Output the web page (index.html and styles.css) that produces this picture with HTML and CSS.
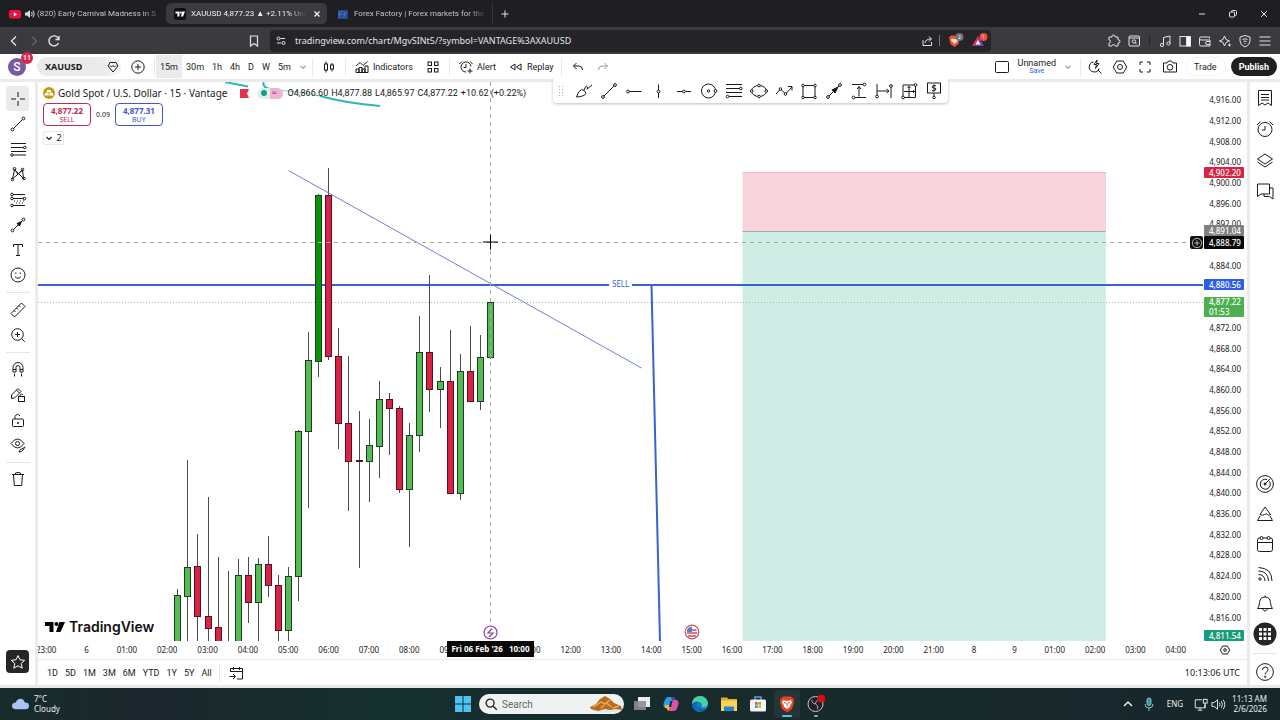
FILE: index.html
```html
<!DOCTYPE html>
<html lang="en">
<head>
    <meta charset="UTF-8">
    <meta name="viewport" content="width=device-width, initial-scale=1.0">
    <title>XAUUSD 4,877.23</title>
    <link rel="stylesheet" href="styles.css">
</head>
<body>
    <header class="browser">
        <div class="tabs">
            <a class="tab tab-first" href="#">
                <svg class="fav" viewBox="0 0 12 12"><rect y="2" width="12" height="8.500" rx="2" fill="#f0123c"/><path d="M4.800 4.300v4l3.400-2z" fill="#fff"/></svg>
                <svg class="fav" viewBox="0 0 12 12"><path d="M2 4.500h2l3-2.500v8l-3-2.500H2z" fill="#ddd"/><path d="M8.500 4q1.500 2 0 4M10 2.500q2.500 3.500 0 7" fill="none" stroke="#ddd"/></svg>
                <span class="tab-title">(820) Early Carnival Madness in S</span>
            </a>
            <a class="tab tab-active" href="#">
                <svg class="fav" viewBox="0 0 12 12"><rect width="12" height="12" rx="2" fill="#111"/><path d="M1.500 3.500h4v5h-2v-3h-2zM8 3.500h3l-2 5H7z" fill="#fff"/><circle cx="6.800" cy="4.500" r="1" fill="#fff"/></svg>
                <span class="tab-title">XAUUSD 4,877.23 ▲ +2.11% Unn</span>
                <svg class="fav tab-close" viewBox="0 0 12 12"><path d="M3.500 3.500l5 5M8.500 3.500l-5 5" fill="none" stroke="#eee" stroke-width="1.300"/></svg>
            </a>
            <a class="tab tab-last" href="#">
                <svg class="fav" viewBox="0 0 12 12"><rect x="1" y="2" width="10" height="9" fill="#29488c"/><path d="M2 10V4h4M2 6.500h3M7 10V5h3M7 7h2" fill="none" stroke="#4d78c8"/></svg>
                <span class="tab-title">Forex Factory | Forex markets for the</span>
            </a>
            <button class="new-tab" aria-label="New tab"><svg class="icon" viewBox="0 0 18 18"><path d="M9 5.500v7M5.500 9h7"/></svg></button>
            <div class="window-buttons">
                <button aria-label="Minimize"><svg class="icon" viewBox="0 0 18 18"><path d="M6 9h6"/></svg></button>
                <button aria-label="Restore"><svg class="icon" viewBox="0 0 18 18"><rect x="5.500" y="7" width="5" height="5" rx="1"/><path d="M7.500 7V6.500a1 1 0 0 1 1-1h3a1 1 0 0 1 1 1v3a1 1 0 0 1-1 1h-1"/></svg></button>
                <button aria-label="Close"><svg class="icon" viewBox="0 0 18 18"><path d="M6 6l6 6M12 6l-6 6"/></svg></button>
            </div>
        </div>
        <div class="address-row">
            <div class="nav-buttons">
                <button aria-label="Back"><svg class="icon" viewBox="0 0 18 18"><path d="M11 4.500L6.500 9l4.500 4.500" stroke-width="1.400"/></svg></button>
                <button class="faded" aria-label="Forward"><svg class="icon" viewBox="0 0 18 18"><path d="M7 4.500L11.500 9 7 13.500"/></svg></button>
                <button aria-label="Reload"><svg class="icon" viewBox="0 0 18 18"><path d="M13.500 11A5 5 0 1 1 13.200 6.200M14 4v3.500h-3.500" stroke-width="1.400"/></svg></button>
            </div>
            <button class="bookmark" aria-label="Bookmark"><svg class="icon" viewBox="0 0 18 18"><path d="M5.500 4h7v10L9 11.500 5.500 14z" stroke-width="1.200"/></svg></button>
            <div class="url-box">
                <svg class="icon" viewBox="0 0 18 18"><circle cx="6.500" cy="6.500" r="1.500"/><path d="M8.500 6.500H13M5 11h4"/><circle cx="11.500" cy="11" r="1.500"/></svg>
                <input class="url" type="text" aria-label="Address" value="tradingview.com/chart/MgvSINt5/?symbol=VANTAGE%3AXAUUSD">
                <button aria-label="Share"><svg class="icon" viewBox="0 0 18 18"><path d="M5 8v5.500h8.500V10M7 11q.5-4 6-4M11 4.500L13.500 7 11 9.500"/></svg></button>
                <span class="url-line"></span>
                <button class="shield" aria-label="Shields">
                    <svg class="color-icon" viewBox="0 0 18 18"><path d="M5 3.500h7l2 2-1.500 6.500L8.500 15 4.500 12 3 5.500z" fill="#f1562b"/><path d="M6 6.500l2.500.8 2.500-.8 1 1.500-1.500 2L8.500 12 6.500 10 5 8z" fill="#fff" opacity=".85"/><circle cx="13.500" cy="5" r="4" fill="#6b7280"/><text x="12" y="7">2</text></svg>
                </button>
                <button class="shield" aria-label="Rewards">
                    <svg class="color-icon" viewBox="0 0 18 18"><path d="M8 4l6 10H2z" fill="#7b3fb5"/><path d="M8 4l-6 10 6-3z" fill="#e0352b"/><path d="M8 8l2.500 4.500h-5z" fill="#fff"/><circle cx="13.500" cy="5" r="4" fill="#ef4a3c"/><text x="12" y="7">1</text></svg>
                </button>
            </div>
            <div class="browser-tools">
                <button aria-label="Extensions"><svg class="icon" viewBox="0 0 18 18"><path d="M4 5h3q-.5-2 1.500-2T10 5h3v3q2-.5 2 1.500T13 11v3h-3q0-1.500-1.500-1.500T7 14H4v-3q1.500 0 1.500-1.500T4 8z"/></svg></button>
                <button aria-label="Search tabs"><svg class="icon" viewBox="0 0 18 18"><rect x="4" y="4" width="10.500" height="10" rx="1"/><path d="M4 6h10"/><circle cx="9" cy="9.500" r="1.700"/><path d="M10.200 10.700l1.500 1.500"/></svg></button>
                <span class="url-line dark"></span>
                <button aria-label="Music"><svg class="icon" viewBox="0 0 18 18"><path d="M7.500 13V5.500L14 4v7.500"/><circle cx="6" cy="13" r="1.600"/><circle cx="12.500" cy="11.500" r="1.600"/></svg></button>
                <button aria-label="Sidebar"><svg class="icon" viewBox="0 0 18 18"><rect x="4" y="4.500" width="10.500" height="9.500"/><rect x="10.500" y="4.500" width="4" height="9.500" fill="#fff"/></svg></button>
                <button aria-label="Wallet"><svg class="icon" viewBox="0 0 18 18"><path d="M13.500 6.500V5H5a1.500 1.500 0 0 0 0 3h9v6H5a1.500 1.500 0 0 1-1.500-1.500V6.500M14 9.500h-3a1 1 0 0 0 0 3h3"/></svg></button>
                <button aria-label="Leo"><svg class="icon" viewBox="0 0 18 18"><path d="M8.500 4q.5 4.500 5 5-4.500.5-5 5-.5-4.500-5-5 4.500-.5 5-5zM13.500 11.500v3M12 13h3"/></svg></button>
                <button aria-label="VPN"><svg class="icon" viewBox="0 0 18 18"><path d="M9 3.500l5 1.500v4q0 4-5 6-5-2-5-6V5z"/><path d="M6.500 7.500q2.500-1.500 5 0M7.500 9.500q1.500-1 3 0M9 11v1"/></svg></button>
                <button aria-label="Menu"><svg class="icon" viewBox="0 0 18 18"><path d="M3.500 5h11M3.500 9h11M3.500 13h11" stroke-width="1.200"/></svg></button>
            </div>
        </div>
    </header>

    <nav class="topbar">
        <button class="avatar" aria-label="Account">S<span class="badge">11</span></button>
        <button class="symbol"><span>XAUUSD</span><svg class="icon" viewBox="0 0 18 18"><path d="M6 4.500h6L14 8l-5 6-5-6zM6 7.500L7.500 9l1.500-1.500L10.500 9 12 7.500"/></svg></button>
        <button class="add" aria-label="Compare"><svg class="icon" viewBox="0 0 18 18"><circle cx="9" cy="9" r="6.200"/><path d="M9 6v6M6 9h6"/></svg></button>
        <span class="sep"></span>
        <div class="intervals">
            <button class="selected">15m</button>
            <button>30m</button>
            <button>1h</button>
            <button>4h</button>
            <button>D</button>
            <button>W</button>
            <button>5m</button>
            <button class="more" aria-label="More intervals"><svg class="icon caret" viewBox="0 0 18 18"><path d="M5 7.500l4 3.500 4-3.500"/></svg></button>
        </div>
        <span class="sep"></span>
        <button class="bar-button" aria-label="Candles"><svg class="icon" viewBox="0 0 18 18"><rect x="4.500" y="6" width="3" height="6"/><path d="M6 3.500V6M6 12v2.500M12 5v2M12 11v2.500"/><rect x="10.500" y="7" width="3" height="4"/></svg></button>
        <span class="sep"></span>
        <button class="bar-button"><svg class="icon" viewBox="0 0 18 18"><path d="M3 14.500V11h3v3.500zM6 14.500V9.500h3v5M9 14.500V11h3v3.500M12 14.500V8h3v6.500H3M3 8l4-3.500 3 3L14.500 3.500"/></svg>Indicators</button>
        <button class="bar-button" aria-label="Templates"><svg class="icon" viewBox="0 0 18 18"><rect x="4" y="4" width="3.500" height="3.500"/><rect x="10.500" y="4" width="3.500" height="3.500"/><rect x="4" y="10.500" width="3.500" height="3.500"/><rect x="10.500" y="10.500" width="3.500" height="3.500"/></svg></button>
        <span class="sep"></span>
        <button class="bar-button"><svg class="icon" viewBox="0 0 18 18"><path d="M14 8.500a5 5 0 1 0-5 5.500M9 6v3.500H6.500M2.500 6L5 3.500M13 3.500L15.500 6M13 10.500v5M10.500 13h5"/></svg>Alert</button>
        <button class="bar-button"><svg class="icon" viewBox="0 0 18 18"><path d="M8 6v6L3.500 9zM14 6v6L9.500 9z"/></svg>Replay</button>
        <span class="sep"></span>
        <button class="bar-button" aria-label="Undo"><svg class="icon" viewBox="0 0 18 18"><path d="M7.500 5L4.500 8l3 3M4.500 8H10q3.500 0 3.500 4"/></svg></button>
        <button class="pale" aria-label="Redo"><svg class="icon" viewBox="0 0 18 18"><path d="M10.500 5l3 3-3 3M13.500 8H8q-3.500 0-3.500 4"/></svg></button>
        <div class="topbar-right">
            <button aria-label="Layout"><svg class="icon" viewBox="0 0 18 18"><rect x="2.500" y="3.500" width="13" height="11" rx="1"/></svg></button>
            <button class="layout-name">Unnamed<small>Save</small></button>
            <button class="name-caret" aria-label="Layouts"><svg class="icon caret" viewBox="0 0 18 18"><path d="M5 7.500l4 3.500 4-3.500"/></svg></button>
            <span class="sep"></span>
            <div class="actions">
                <button aria-label="Quick search"><svg class="icon" viewBox="0 0 18 18"><path d="M7.500 4a5 5 0 1 0 5.500 6.500M12 12l3.500 3.500"/><path d="M11 2L8 6.500h2.500L9.500 10.500l3.500-5h-2.500z"/></svg></button>
                <button aria-label="Settings"><svg class="icon" viewBox="0 0 18 18"><path d="M5.700 3h6.600L15.700 9l-3.400 6H5.700L2.300 9z"/><circle cx="9" cy="9" r="2.500"/></svg></button>
                <button aria-label="Fullscreen"><svg class="icon" viewBox="0 0 18 18"><path d="M4 7V4h3M11 4h3v3M14 11v3h-3M7 14H4v-3"/></svg></button>
                <button aria-label="Snapshot"><svg class="icon" viewBox="0 0 18 18"><path d="M2.500 5H6l1.500-2h3L12 5h3.500v9h-13z"/><circle cx="9" cy="9.300" r="2.800"/></svg></button>
            </div>
            <button class="trade">Trade</button>
            <button class="publish">Publish</button>
        </div>
    </nav>

    <main class="workspace">
        <aside class="left-rail">
            <div class="tools">
                <button class="tool selected" aria-label="Cross"><svg class="icon" viewBox="0 0 18 18"><path d="M9 2v5M9 11v5M2 9h5M11 9h5"/></svg></button>
                <button class="tool" aria-label="Trend line"><svg class="icon" viewBox="0 0 18 18"><path d="M4.500 13.500l9-9"/><circle cx="3.500" cy="14.500" r="1.400"/><circle cx="14.500" cy="3.500" r="1.400"/></svg></button>
                <button class="tool" aria-label="Fibonacci"><svg class="icon" viewBox="0 0 18 18"><path d="M2 3.500h15M2 7.500h12.500M2 11.500h15M4.500 15H17"/><circle cx="15.800" cy="7.500" r="1.300"/><circle cx="3" cy="15" r="1.300"/></svg></button>
                <button class="tool" aria-label="Pattern"><svg class="icon" viewBox="0 0 18 18"><path d="M3.500 14l2-9.500 9 9L13.500 5 3.500 14M5.500 4.500L9 9l4.500-4"/><circle cx="3.500" cy="14.500" r="1.300"/><circle cx="5.500" cy="3.800" r="1.300"/><circle cx="13.500" cy="4.500" r="1.300"/><circle cx="15" cy="13.500" r="1.300"/></svg></button>
                <button class="tool" aria-label="Prediction"><svg class="icon" viewBox="0 0 18 18"><path d="M4 3.500h12M4 7.500h10.500M4 14.500h12"/><path d="M5 10h11M7 12h9" stroke-dasharray="1 2"/><circle cx="3" cy="3.500" r="1.300"/><circle cx="3" cy="7.500" r="1.300"/><circle cx="15.500" cy="7.500" r="1.300"/><circle cx="3" cy="14.500" r="1.300"/></svg></button>
                <button class="tool" aria-label="Arrow"><svg class="icon" viewBox="0 0 18 18"><path d="M4.500 13.500l9-9"/><path d="M8 7.500l4.500-2-2 4.500z" fill="#111"/><circle cx="3.500" cy="14.500" r="1.400"/><circle cx="14.500" cy="3.500" r="1.400"/></svg></button>
                <button class="tool" aria-label="Text"><svg class="icon" viewBox="0 0 18 18"><path d="M4.500 6V3.500h9V6M9 3.500v11M7 14.500h4"/></svg></button>
                <button class="tool" aria-label="Emoji"><svg class="icon" viewBox="0 0 18 18"><circle cx="9" cy="9" r="7"/><path d="M6 10.500q3 3.500 6 0M6.800 6.500v1.500M11.200 6.500v1.500"/></svg></button>
                <hr>
                <button class="tool" aria-label="Measure"><svg class="icon" viewBox="0 0 18 18"><path d="M2 12.500L12.500 2 16 5.500 5.500 16zM5 9.500L6.500 11M7.500 7L9 8.500M10 4.500L11.500 6"/></svg></button>
                <button class="tool" aria-label="Zoom in"><svg class="icon" viewBox="0 0 18 18"><circle cx="8.500" cy="8.500" r="5.800"/><path d="M12.800 12.800l3 3M8.500 6v5M6 8.500h5"/></svg></button>
                <hr>
                <button class="tool" aria-label="Magnet"><svg class="icon" viewBox="0 0 18 18"><path d="M4 12V7.500a5 5 0 0 1 10 0V12h-3V7.500a2 2 0 0 0-4 0V12zM4 9.500h3M11 9.500h3M5.500 13.500v3M12.500 13.500v3"/></svg></button>
                <button class="tool" aria-label="Lock drawing"><svg class="icon" viewBox="0 0 18 18"><path d="M2.500 12.500V9L9 2.500 12 5.500l-6.500 6.500zM7.500 4l3 3"/><rect x="9.500" y="10.500" width="6" height="5"/><path d="M11 10.500V9q1.500-2 3 0"/></svg></button>
                <button class="tool" aria-label="Lock all"><svg class="icon" viewBox="0 0 18 18"><rect x="3.500" y="8" width="11" height="7.500" rx="1"/><path d="M6 8V5.500q2-4 5-.5"/><path d="M9 11v2" stroke-width="1.500"/></svg></button>
                <button class="tool" aria-label="Hide drawings"><svg class="icon" viewBox="0 0 18 18"><path d="M2 7.500q6.500-9 13 0-6.500 9-13 0z"/><circle cx="8.500" cy="7.500" r="2"/><path d="M10 16q1-3.500 3-3l3-2-2 3q-1 2-4 2z"/></svg></button>
                <hr>
                <button class="tool" aria-label="Remove"><svg class="icon" viewBox="0 0 18 18"><path d="M3 4.500h12M6.500 4.500V3q2.500-1 5 0v1.500M4.500 4.500l.8 11h7.400l.8-11"/></svg></button>
            </div>
            <button class="star" aria-label="Favorites"><svg class="icon" viewBox="0 0 18 18"><path d="M9 2.500l2 4.300 4.700.5-3.500 3.200 1 4.700L9 12.800l-4.200 2.400 1-4.700L2.300 7.300l4.700-.5z"/></svg></button>
        </aside>

        <section class="chart">
            <div class="plot">
                <svg class="plot-canvas" role="img" aria-label="XAUUSD 15 minute candles">
                    <g transform="translate(-38 -82)">
                        <rect class="stop-zone" x="742.500" y="172.500" width="363.500" height="58.500"/>
                        <rect class="target-zone" x="742.500" y="231" width="363.500" height="410"/>
                        <path class="stop-edge" d="M742.500 172.500H1106"/>
                        <path class="entry-edge" d="M742.500 231.500H1106"/>
                        <path class="price-line" d="M38 302.500H4000"/>
                        <path class="sell-line" d="M38 285H4000"/>
                        <rect x="609" y="279" width="23" height="11" fill="#fff"/>
                        <text class="sell-text" x="612" y="287">SELL</text>
                        <path class="sell-line" d="M651.500 285L660 641"/>
                        <g id="candles"></g>
                        <path class="trend" d="M288.500 170.500L641.500 368"/>
                        <path class="brush" d="M225 82L248 86.500M263.500 82v3q2 4 10 5"/>
                        <path class="brush thin" d="M273 90q26 1 47 6"/>
                        <path class="brush" d="M320 96q25 7 60 10"/>
                        <path class="crosshair" d="M38 242.500H4000M490.500 82V641"/>
                        <path class="cursor" d="M483 242h15M490.500 234.500v15"/>
                        <circle cx="490.500" cy="632.500" r="6.500" fill="#fff" stroke="#8e3a9c" stroke-width="1.200"/>
                        <path d="M492 628.500l-4 4.500h5l-4 4" fill="none" stroke="#8e3a9c" stroke-width="1.200"/>
                        <circle cx="692" cy="632" r="6.800" fill="#fff" stroke="#c9506a" stroke-width="1.200"/>
                        <path d="M687.500 630h9M687 633h10M688 636h8" stroke="#d9475f" stroke-width="1.500"/>
                        <path d="M687 632v-2.500q1.500-2.500 5-3v5.500z" fill="#4a86c8"/>
                    </g>
                </svg>
                <div class="legend">
                    <div class="legend-row">
                        <svg class="gold" viewBox="0 0 12 12"><circle cx="6" cy="6" r="6" fill="#c79a14"/><path d="M4.300 3h3.400l.8 2.500h-5zM2 6h3.300l.5 2.500H1.500zM6.700 6H10l.5 2.500H6.200z" fill="#fff"/></svg>
                        <span class="name">Gold Spot / U.S. Dollar · 15 · Vantage</span>
                        <svg class="flag" viewBox="0 0 9 9"><path d="M0 0h9L7 4.500 9 9H0z" fill="#e8314f"/></svg>
                        <span class="status"><i class="market"></i><i class="approx">≈</i></span>
                        <span class="ohlc"><span>O4,866.60</span><span>H4,877.88</span><span>L4,865.97</span><span>C4,877.22</span><span>+10.62 (+0.22%)</span></span>
                    </div>
                    <div class="quotes">
                        <button class="quote sell"><b>4,877.22</b>SELL</button>
                        <span class="spread">0.09</span>
                        <button class="quote buy"><b>4,877.31</b>BUY</button>
                    </div>
                    <button class="collapse"><svg class="icon" viewBox="0 0 8 8"><path d="M1.500 3L4 5.500 6.500 3" stroke-width="1.200"/></svg>2</button>
                </div>
                <div class="brand">
                    <svg viewBox="0 0 20 10"><path d="M0 0h8.500v10H4.500V4H0zM14.500 0H20l-4.500 10H11z"/><circle cx="11.500" cy="2" r="2"/></svg>
                    TradingView
                </div>
            </div>
            <div class="price-axis">
                <div class="prices" id="prices"></div>
                <span class="tag tag-stop">4,902.20</span>
                <span class="tag tag-entry">4,891.04</span>
                <span class="tag tag-cross">4,888.79</span>
                <button class="axis-add" aria-label="Add at price"><svg class="icon" viewBox="0 0 18 18"><circle cx="9" cy="9" r="7"/><path d="M9 5v8M5 9h8"/></svg></button>
                <span class="tag tag-line">4,880.56</span>
                <span class="tag tag-last">4,877.22<br>01:53</span>
                <span class="tag tag-target">4,811.54</span>
            </div>
            <div class="time-axis">
                <div class="times" id="times"></div>
                <span class="time-tag">Fri 06 Feb '26 &nbsp; 10:00</span>
            </div>
            <button class="axis-settings" aria-label="Axis settings"><svg class="icon" viewBox="0 0 18 18"><path d="M5.500 3h7L16 9l-3.500 6h-7L2 9z" stroke-width="1.500"/><circle cx="9" cy="9" r="2" stroke-width="1.500"/></svg></button>
            <div class="range-bar">
                <div class="ranges">
                    <button>1D</button>
                    <button>5D</button>
                    <button>1M</button>
                    <button>3M</button>
                    <button>6M</button>
                    <button>YTD</button>
                    <button>1Y</button>
                    <button>5Y</button>
                    <button>All</button>
                </div>
                <span class="sep"></span>
                <button aria-label="Go to date"><svg class="icon" viewBox="0 0 18 18"><path d="M3.500 8V4.500h12v10.500H10M3.500 7.500h12M6.500 3v3M12.500 3v3M2.500 12.500H8M6 10l2.500 2.500L6 15"/></svg></button>
                <span class="utc">10:13:06 UTC</span>
            </div>
            <div class="drawing-bar">
                <svg class="grip" viewBox="0 0 6 12"><path d="M1 1h1v1H1zM4 1h1v1H4zM1 4h1v1H1zM4 4h1v1H4zM1 7h1v1H1zM4 7h1v1H4zM1 10h1v1H1zM4 10h1v1H4z" fill="#b0b0b0"/></svg>
                <button aria-label="Brush"><svg class="icon" viewBox="0 0 18 18"><path d="M1.500 15q1.500-6 5-7.500 4 .5 4.500 4-1.500 3-9.500 3.500zM9 8q2-5 3-3.500t0 2.500 5-4"/></svg></button>
                <button aria-label="Trend line"><svg class="icon" viewBox="0 0 18 18"><path d="M4 14l10-10"/><circle cx="3" cy="15" r="1.400"/><circle cx="15" cy="3" r="1.400"/></svg></button>
                <button aria-label="Horizontal ray"><svg class="icon" viewBox="0 0 18 18"><path d="M4.500 9.500h12"/><circle cx="3" cy="9.500" r="1.400"/></svg></button>
                <button aria-label="Vertical line"><svg class="icon" viewBox="0 0 18 18"><path d="M8.500 2.500V8M8.500 11v5"/><circle cx="8.500" cy="9.500" r="1.400"/></svg></button>
                <button aria-label="Horizontal line"><svg class="icon" viewBox="0 0 18 18"><path d="M2 9.500h5M10.500 9.500H16"/><circle cx="8.800" cy="9.500" r="1.400"/></svg></button>
                <button aria-label="Circle"><svg class="icon" viewBox="0 0 18 18"><circle cx="8.500" cy="9" r="7"/><circle cx="8.500" cy="9" r="1.200"/><circle cx="15.500" cy="9" r="1.400" fill="#fff"/></svg></button>
                <button aria-label="Fibonacci"><svg class="icon" viewBox="0 0 18 18"><path d="M1 2.500h16M1 6.500h13.500M1 10.500h16M4 14.500h13"/><circle cx="15.800" cy="6.500" r="1.300"/><circle cx="2.500" cy="14.500" r="1.300"/></svg></button>
                <button aria-label="Ellipse"><svg class="icon" viewBox="0 0 18 18"><ellipse cx="9" cy="9" rx="7.500" ry="5.500"/><g fill="#fff"><circle cx="1.700" cy="9" r="1.300"/><circle cx="16.300" cy="9" r="1.300"/><circle cx="9" cy="3.500" r="1.300"/><circle cx="9" cy="14.500" r="1.300"/></g></svg></button>
                <button aria-label="Path"><svg class="icon" viewBox="0 0 18 18"><path d="M1 12l4.500-5 5 5L17 5M13 4.500h4v4"/><g fill="#fff"><circle cx="5.500" cy="7" r="1.300"/><circle cx="10.500" cy="12" r="1.300"/></g></svg></button>
                <button aria-label="Rectangle"><svg class="icon" viewBox="0 0 18 18"><rect x="3" y="3.500" width="12" height="12"/><g fill="#fff"><circle cx="3" cy="3.500" r="1.300"/><circle cx="15" cy="3.500" r="1.300"/><circle cx="3" cy="15.500" r="1.300"/><circle cx="15" cy="15.500" r="1.300"/></g></svg></button>
                <button aria-label="Arrow"><svg class="icon" viewBox="0 0 18 18"><path d="M4 14L14 4"/><path d="M7 8l6-3-3 6z" fill="#111"/><circle cx="3" cy="15" r="1.400"/><circle cx="15" cy="3" r="1.400"/></svg></button>
                <button aria-label="Price range"><svg class="icon" viewBox="0 0 18 18"><path d="M2 2.500h11M5 15.500h11M9 4.500v10M7 7l2-2.500L11 7"/><circle cx="14.500" cy="2.500" r="1.400"/><circle cx="3.500" cy="15.500" r="1.400"/></svg></button>
                <button aria-label="Date range"><svg class="icon" viewBox="0 0 18 18"><path d="M2 2v11M16 5.500V16M2 9h12M11.500 7L14 9l-2.500 2"/><circle cx="16" cy="4" r="1.400"/><circle cx="2" cy="14.500" r="1.400"/></svg></button>
                <button aria-label="Date and price range"><svg class="icon" viewBox="0 0 18 18"><path d="M3 14V3h11M15.500 4v11.500H4M9 4v11M4 9.500h11M7.500 6L9 4.500 10.500 6M13 8l1.500 1.500L13 11"/><circle cx="15.500" cy="3" r="1.400"/><circle cx="3" cy="15.500" r="1.400"/></svg></button>
                <button aria-label="Price note"><svg class="icon" viewBox="0 0 18 18"><rect x="2.500" y="1" width="13" height="10"/><path d="M11 4q-2-1.500-3.500 0t1.500 2 1.500 2-3.500.500M9 2.500v7M9 11v3"/><circle cx="9" cy="15.500" r="1.300"/></svg></button>
            </div>
        </section>

        <aside class="right-rail">
            <div class="panel-top">
                <button aria-label="Watchlist"><svg class="icon" viewBox="0 0 18 18"><path d="M2.500 1.500h13v15L12 14l-3 2-3-2-3.500 2.500zM5 5.500h8M5 8.500h8M5 11h8"/></svg></button>
                <button aria-label="Alerts"><svg class="icon" viewBox="0 0 18 18"><circle cx="9" cy="9.500" r="7"/><path d="M9 6v4H6M1 5l3.500-3.500M13.500 1.500L17 5"/></svg></button>
                <button aria-label="Object tree"><svg class="icon" viewBox="0 0 18 18"><path d="M9 3l7.500 5L9 13 1.500 8zM1.500 11L9 16l7.500-5"/></svg></button>
                <button aria-label="Chats"><svg class="icon" viewBox="0 0 18 18"><path d="M1.500 2h12v10H5l-3.500 2.500zM13.500 6H17v11l-3.500-2.500H8V12"/></svg></button>
            </div>
            <div class="panel-bottom">
                <button aria-label="Screeners"><svg class="icon" viewBox="0 0 18 18"><circle cx="9" cy="9" r="8.400"/><path d="M13.500 6.500A5 5 0 1 1 11 4.500M9 9l5-5"/><circle cx="9" cy="9" r="1" fill="#111"/></svg></button>
                <button aria-label="Pine"><svg class="icon" viewBox="0 0 18 18"><path d="M9 2l5.500 7.500q-2 1.500-3 0t-3 0-4.500 0zM4 11L1.500 15.500h15L14 11"/></svg></button>
                <button aria-label="Calendar"><svg class="icon" viewBox="0 0 18 18"><rect x="1.500" y="3" width="15" height="13.500" rx="2"/><path d="M1.500 7.500h15"/><g fill="#fff"><circle cx="5.500" cy="3" r="1.500"/><circle cx="12.500" cy="3" r="1.500"/></g></svg></button>
                <button aria-label="News"><svg class="icon" viewBox="0 0 18 18"><circle cx="4" cy="14" r="1.200"/><path d="M2.500 9.500q6 0 6.500 6.500M2.500 6q9.500 0 10 10M2.500 2.500Q16 3 16 16"/></svg></button>
                <button aria-label="Notifications"><svg class="icon" viewBox="0 0 18 18"><path d="M1.500 13.500q2-2 2-6Q4 2 9 2t5.500 5.500q0 4 2 6zM6.500 14q2.500 4 5 0M9 .5V2"/></svg></button>
                <button class="apps" aria-label="Products"><svg viewBox="0 0 24 24"><circle cx="12" cy="12" r="11.500" fill="#262626"/><path d="M6 6h3v3H6zM10.500 6h3v3h-3zM15 6h3v3h-3zM6 10.500h3v3H6zM10.500 10.500h3v3h-3zM15 10.500h3v3h-3zM6 15h3v3H6zM10.500 15h3v3h-3zM15 15h3v3h-3z" fill="#fff"/></svg></button>
                <hr>
                <button class="help" aria-label="Help"><svg class="icon" viewBox="0 0 18 18"><circle cx="9" cy="9" r="8.400"/><path d="M6.500 7q0-3 2.800-3t2.700 2.500q0 1.500-1.500 2.500T9.200 11.500"/><circle cx="9.200" cy="13.800" r=".7"/></svg></button>
            </div>
        </aside>
    </main>

    <footer class="taskbar">
        <button class="weather">
            <svg viewBox="0 0 18 12"><path d="M4 11.500q-4-.3-4-3.500t4-3.500Q5.500.5 9 .5t4.500 4q4.500 0 4.500 3.500t-4 3.500z" fill="#a9c3f5"/></svg>
            <span>7°C<br>Cloudy</span>
        </button>
        <div class="dock">
            <button aria-label="Start"><svg viewBox="0 0 18 18"><path d="M1 1h7.500v7.500H1zM9.500 1H17v7.500H9.500zM1 9.500h7.500V17H1zM9.500 9.500H17V17H9.500z" fill="#4cc2f5"/></svg></button>
            <label class="search">
                <svg class="icon" viewBox="0 0 18 18"><circle cx="8" cy="8" r="4.500" stroke-width="1.500"/><path d="M11.500 11.500l4 4" stroke-width="1.500"/></svg>
                <input type="text" placeholder="Search" aria-label="Search">
                <svg class="food" viewBox="0 0 34 18"><ellipse cx="17" cy="14" rx="14" ry="3.500" fill="#dfe4e6"/><path d="M1 12l6-3 4-5 5-3 5 3 4 4 7 3 1 4-6-1-6 1-5-1-7 2-7-2z" fill="#b86a1d"/><path d="M4 12l8-5 4 2 5-4M12 13l5-5 6 4M24 13l6-2" fill="none" stroke="#e7ab53" stroke-width="1.500"/></svg>
            </label>
            <button aria-label="Task view"><svg viewBox="0 0 18 18"><rect x="5" y="2" width="12" height="10" fill="#eee"/><rect x="1" y="6" width="12" height="9" fill="#8b8f90" opacity=".9"/></svg></button>
            <button aria-label="Copilot"><svg viewBox="0 0 18 18"><path d="M6 2h5l-3 11H3q-2-1-1.500-4L3 4.500Q4 2 6 2z" fill="#2b9be8"/><path d="M11 2q2 0 2.500 3H15q2 1 1.500 4L15 13.500Q14 16 12 16H7l3.500-11z" fill="#d9569c"/><path d="M3 10q4-1 5 2l-1 4q-2-.5-2.500-3H3z" fill="#f2b43c"/><path d="M9 2h2q2 0 2.500 3H10z" fill="#2253c9"/><path d="M8.500 6h2L9 12H7z" fill="#182a2c"/></svg></button>
            <button aria-label="Edge"><svg viewBox="0 0 18 18"><circle cx="9" cy="9" r="8" fill="#1583d8"/><path d="M1 9a8 8 0 0 1 16 0q-.5 3-4 3-2.500 0-2-1.500Q11 7 8 7 4 7 1 9z" fill="#48d0a0"/><path d="M1 9q3-3.500 7-2-2.500 1-2 4.500.5 4 5 5.300A8 8 0 0 1 1 9z" fill="#1267b4"/><path d="M8 9.500q-.5 4.500 4 5 2 0 3.500-1-2 3-4.500 3.500Q6 14 8 9.500z" fill="#182a2c" opacity=".5"/></svg></button>
            <button aria-label="Files"><svg viewBox="0 0 18 18"><path d="M1 2.500h6L8.500 4H17v4H1z" fill="#e2a52e"/><rect x="1" y="5.500" width="16" height="10.500" fill="#fbd35b"/><path d="M4 16v-4.500h10V16z" fill="#2c83c8"/></svg></button>
            <button aria-label="Store"><svg viewBox="0 0 18 18"><path d="M6 5V2h6v3" fill="none" stroke="#50a7e0" stroke-width="1.500"/><rect x="1" y="4.500" width="16" height="12" rx="1.500" fill="#f2f4f5"/><path d="M6 7h2.700v2.700H6z" fill="#e84e36"/><path d="M9.300 7H12v2.700H9.300z" fill="#7db72f"/><path d="M6 10.300h2.700V13H6z" fill="#2aa3e0"/><path d="M9.300 10.300H12V13H9.300z" fill="#f4b52b"/></svg></button>
            <button class="running" aria-label="Brave"><svg viewBox="0 0 18 18"><path d="M5 1.500h8l1.500 1.500h1L16 7l-2 7-5 3.500L4 14 2 7l.5-4h1z" fill="#ee3f24"/><path d="M5 5l2.500.8h3L13 5l1 2.500-2 3 .5 1L9 14l-3.500-2.500.5-1-2-3z" fill="#fff"/><path d="M6 7.500l2 .7M12 7.500l-2 .7M9 8v3" stroke="#ee3f24"/></svg></button>
            <button class="idle" aria-label="OBS"><svg viewBox="0 0 18 18"><circle cx="8.500" cy="9" r="7.500" fill="#222" stroke="#c8c8c8"/><path d="M8.500 9Q4.500 8.500 5 5M8.500 9q3.500 1.500 2 5M8.500 9q0-4 4-3.500" fill="none" stroke="#b0b0b0"/><circle cx="14.500" cy="3.500" r="4" fill="#e30613"/></svg></button>
        </div>
        <div class="tray">
            <button aria-label="Hidden icons"><svg class="icon" viewBox="0 0 18 18"><path d="M5 11l4-4 4 4" stroke-width="1.500"/></svg></button>
            <button class="mic" aria-label="Microphone"><svg class="icon" viewBox="0 0 18 18"><rect x="7" y="3" width="4" height="7.500" rx="2" fill="#3f8f95"/><path d="M5 9q0 4 4 4t4-4M9 13v3"/></svg></button>
            <button class="lang">ENG</button>
            <button class="status-icons" aria-label="Network and volume">
                <svg class="icon" viewBox="0 0 18 18"><path d="M10.500 4H3.500v8.500h10V9M6 15h5M8.500 12.500V15"/><rect x="12" y="3.500" width="4" height="4"/><path d="M14 7.500V13"/></svg>
                <svg class="icon" viewBox="0 0 18 18"><path d="M3 7h2.500L9 4v10l-3.500-3H3zM11 7q1.500 2 0 4M13 5.500q2.500 3.500 0 7M15 4q3.500 5 0 10"/></svg>
            </button>
            <button class="clock">11:13 AM<br>2/6/2026</button>
        </div>
    </footer>

    <script>
        // x, high, body top, body bottom, low, colour
        const candles = [
            [177.5, 589, 595, 645, 645, 'up'],
            [187.5, 460, 567, 596, 645, 'up'],
            [197.5, 534, 566, 616, 645, 'down'],
            [208.5, 497, 616, 628, 645, 'down'],
            [218.5, 557, 627, 645, 645, 'down'],
            [228.5, 571, 645, 650, 650, 'down'],
            [238.5, 559, 575, 645, 645, 'up'],
            [248.5, 557, 575, 602, 623, 'down'],
            [258.5, 558, 564, 602, 645, 'up'],
            [268.5, 536, 564, 585, 597, 'down'],
            [278.5, 575, 585, 630, 645, 'down'],
            [288.5, 567, 576, 630, 645, 'up'],
            [298.5, 430, 431, 576, 601, 'up'],
            [308.5, 332, 360, 431, 508, 'up'],
            [318.5, 194, 195, 361, 377, 'strong'],
            [328.5, 168, 195, 356, 360, 'down'],
            [338.5, 328, 356, 423, 449, 'down'],
            [348.5, 356, 423, 461, 511, 'down'],
            [359.5, 411, 460, 461, 568, 'down'],
            [369.5, 419, 445, 461, 502, 'up'],
            [379.5, 381, 399, 446, 478, 'up'],
            [389.5, 393, 399, 408, 455, 'down'],
            [399.5, 406, 408, 489, 493, 'down'],
            [409.5, 423, 435, 489, 547, 'up'],
            [419.5, 316, 352, 435, 452, 'up'],
            [429.5, 275, 352, 389, 412, 'down'],
            [440.5, 367, 381, 389, 428, 'up'],
            [450.5, 330, 381, 493, 494, 'down'],
            [460.5, 354, 371, 493, 500, 'up'],
            [470.5, 326, 371, 401, 401, 'down'],
            [480.5, 335, 357, 401, 410, 'up'],
            [490.5, 299, 302, 357, 359, 'up']
        ];

        const ns = 'http://www.w3.org/2000/svg';
        const group = document.getElementById('candles');
        for (const [x, high, top, bottom, low, kind] of candles) {
            const wick = document.createElementNS(ns, 'path');
            wick.setAttribute('class', 'wick');
            wick.setAttribute('d', `M${x} ${high}V${low}`);
            const body = document.createElementNS(ns, 'rect');
            body.setAttribute('class', kind);
            body.setAttribute('x', x - 3);
            body.setAttribute('y', top + 0.5);
            body.setAttribute('width', 6);
            body.setAttribute('height', bottom - top);
            group.append(wick, body);
        }

        const prices = document.getElementById('prices');
        for (let p = 4916; p >= 4816; p -= 4) {
            const label = document.createElement('span');
            label.textContent = p.toLocaleString('en-US') + '.00';
            // these three sit behind the price tags
            if (p === 4888 || p === 4880 || p === 4876) label.className = 'covered';
            prices.append(label);
        }

        const hours = ['23:00', '6'];
        for (let h = 1; h <= 21; h++) hours.push(String(h).padStart(2, '0') + ':00');
        hours.push('8', '9', '01:00', '02:00', '03:00', '04:00');
        const times = document.getElementById('times');
        for (const h of hours) {
            const label = document.createElement('span');
            label.textContent = h;
            times.append(label);
        }
    </script>
</body>
</html>
```

FILE: styles.css
```css
* {
    box-sizing: border-box;
}

body {
    margin: 0;
    min-height: 100vh;
    display: flex;
    flex-direction: column;
    font-family: "Noto Sans", "Open Sans", sans-serif;
    font-size: 9px;
    line-height: 12px;
    color: #1a1a1a;
    background-color: #fff;
    overflow: hidden;
}

button {
    display: flex;
    align-items: center;
    justify-content: center;
    padding: 0;
    border: none;
    background: none;
    color: inherit;
    font: inherit;
    cursor: pointer;
    white-space: nowrap;
}

svg {
    display: block;
    flex-shrink: 0;
}

input {
    border: none;
    outline: none;
    background: none;
    padding: 0;
    font: inherit;
    color: inherit;
    min-width: 0;
}

hr {
    width: 24px;
    height: 1px;
    margin: 4px auto;
    border: none;
    background-color: #e6e6e6;
}

.icon {
    width: 18px;
    height: 18px;
    fill: none;
    stroke: currentColor;
    stroke-width: 1;
}

.sep {
    width: 1px;
    height: 18px;
    background-color: #e8e8e8;
}

/* browser */
.browser {
    color: #e4e4e6;
    background-color: #1f1e23;
}

.tabs {
    display: flex;
    align-items: center;
    height: 27px;
    padding-left: 9px;
    font-family: Roboto, sans-serif;
    font-size: 8px;
}

.tab {
    display: flex;
    align-items: center;
    gap: 2px;
    height: 21px;
    color: #c4c4c8;
    text-decoration: none;
}

.tab-first {
    width: 157px;
    padding-right: 4px;
}

.tab-active {
    width: 161px;
    padding: 0 4px 0 8px;
    gap: 5px;
    border-radius: 5px;
    color: #f0f0f0;
    background-color: #3b3a3f;
}

.tab-last {
    width: 166px;
    padding: 0 4px 0 10px;
    gap: 5px;
    border-right: 1px solid #34333a;
}

.fav {
    width: 12px;
    height: 12px;
}

.tab-title {
    flex: 1;
    overflow: hidden;
    white-space: nowrap;
    mask-image: linear-gradient(to right, #000 85%, transparent);
}

.new-tab {
    margin-left: 3px;
}

.window-buttons {
    display: flex;
    gap: 13px;
    margin-left: auto;
    padding-right: 7px;
}

.address-row {
    display: flex;
    align-items: center;
    height: 27px;
    background-color: #3b3a3f;
}

.nav-buttons {
    display: flex;
    gap: 2px;
    padding-left: 5px;
}

.faded {
    color: #8a898f;
}

.bookmark {
    margin-left: 182px;
}

.url-box {
    flex: 1;
    display: flex;
    align-items: center;
    height: 22px;
    margin-left: 7px;
    padding: 0 3px 0 2px;
    border-radius: 4px;
    background-color: #252429;
}

.url {
    flex: 1;
    padding-left: 5px;
}

.url-line {
    width: 1px;
    height: 11px;
    margin: 0 3px;
    background-color: #77767c;
}

.url-line.dark {
    margin: 0 4px;
    background-color: #232227;
}

.shield {
    margin-left: 3px;
}

.shield + .shield {
    margin-left: 6px;
}

.color-icon {
    width: 18px;
    height: 18px;
}

.color-icon text {
    font-size: 5px;
    fill: #fff;
}

.browser-tools {
    display: flex;
    align-items: center;
    gap: 2px;
    margin-left: 114px;
    padding-right: 6px;
}

/* top toolbar */
.topbar {
    display: flex;
    align-items: center;
    height: 28px;
    padding: 0 3px 0 8px;
    border-bottom: 3px solid #ebebeb;
    font-family: Roboto, sans-serif;
}

.avatar {
    position: relative;
    width: 18px;
    height: 18px;
    border-radius: 50%;
    font-size: 12px;
    font-weight: 500;
    color: #fff;
    background-color: #7a58a0;
}

.badge {
    position: absolute;
    top: -6px;
    left: 13px;
    width: 12px;
    height: 12px;
    border-radius: 6px;
    font-size: 7px;
    font-weight: bold;
    background-color: #dc2549;
}

.symbol {
    justify-content: space-between;
    width: 85px;
    height: 19px;
    margin-left: 11px;
    padding: 0 0 0 8px;
    border-radius: 10px;
    font-family: "Noto Sans", sans-serif;
    font-weight: bold;
    background: linear-gradient(to right, #ebebeb 75%, #f8f8f8);
}

.add {
    margin: 0 7px;
}

.intervals {
    display: flex;
    height: 23px;
    margin: 0 1px;
}

.intervals button {
    padding: 0 4px;
}

.intervals .more {
    padding: 0 2px;
}

.intervals .selected {
    background-color: #ebebeb;
}

.caret {
    width: 12px;
    height: 12px;
}

.bar-button {
    gap: 2px;
    margin: 0 7px;
}

.bar-button + .bar-button {
    margin-left: 4px;
}

.pale {
    color: #9a9a9a;
}

.topbar-right {
    display: flex;
    align-items: center;
    margin-left: auto;
}

.layout-name {
    flex-direction: column;
    margin-left: 7px;
    line-height: 9px;
}

.layout-name small {
    font-size: 7px;
    line-height: 7px;
    color: #2962ff;
}

.name-caret {
    margin: 0 6px;
}

.actions {
    display: flex;
    gap: 7px;
    margin: 0 6px 0 5px;
}

.trade,
.publish {
    height: 19px;
    padding: 0 8px;
    border-radius: 10px;
}

.trade {
    margin-right: 5px;
    border: 1px solid #f2f2f2;
}

.publish {
    font-weight: bold;
    color: #fff;
    background-color: #1f1f1f;
}

/* workspace */
.workspace {
    flex: 1;
    display: flex;
    min-height: 0;
    border-bottom: 3px solid #e8e8e8;
}

.left-rail {
    display: flex;
    flex-direction: column;
    width: 38px;
    padding: 4px 6px 12px 6px;
    border-right: 3px solid #ebebeb;
}

.tools {
    flex: 1;
    display: flex;
    flex-direction: column;
    margin-bottom: 158px;
}

.tool {
    flex: 1;
    width: 23px;
    border-radius: 3px;
}

.tool.selected {
    background-color: #ebebeb;
}

.star {
    width: 23px;
    height: 23px;
    border-radius: 4px;
    color: #fff;
    background-color: #262626;
}

.right-rail {
    display: flex;
    flex-direction: column;
    justify-content: space-between;
    width: 33px;
    border-left: 3px solid #ebebeb;
}

.right-rail button {
    width: 30px;
    height: 30px;
}

.right-rail .help {
    height: 27px;
}

.panel-top {
    display: flex;
    flex-direction: column;
    gap: 1px;
    padding-top: 1px;
}

.apps svg {
    width: 24px;
    height: 24px;
}

/* chart */
.chart {
    position: relative;
    flex: 1;
    display: grid;
    grid-template-columns: 1fr 44px;
    grid-template-rows: 1fr 18px 26px;
    min-width: 0;
}

/* floats over the chart and the toolbar's bottom edge */
.drawing-bar {
    position: absolute;
    top: -4px;
    left: 515px;
    display: flex;
    align-items: center;
    height: 25px;
    padding: 0 5px;
    gap: 7px;
    border-radius: 0 0 4px 4px;
    background-color: #fff;
    box-shadow: 0 1px 3px rgba(0, 0, 0, 0.25);
    clip-path: inset(0 -4px -5px -4px);
}

.grip {
    width: 6px;
    height: 12px;
    margin-right: 4px;
}

.plot {
    position: relative;
    overflow: hidden;
}

.plot-canvas {
    position: absolute;
    width: 100%;
    height: 100%;
}

.stop-zone {
    fill: #f8d3dc;
}

.target-zone {
    fill: #d0eee5;
}

.stop-edge {
    stroke: #efb9c4;
}

.entry-edge {
    stroke: #a5aaa8;
}

.price-line {
    stroke: #a9b8a6;
    stroke-dasharray: 1 2;
}

.sell-line {
    fill: none;
    stroke: #3663d0;
    stroke-width: 2;
}

.sell-text {
    font-size: 8px;
    fill: #3663d0;
}

.trend {
    stroke: #6f7fd6;
}

.brush {
    fill: none;
    stroke: #2fb8b0;
    stroke-width: 2;
}

.brush.thin {
    stroke-width: 1;
    opacity: 0.6;
}

.crosshair {
    fill: none;
    stroke: #a8a8a8;
    stroke-dasharray: 4 4;
}

.cursor {
    stroke: #000;
    stroke-width: 1;
}

.wick {
    stroke: #4a4a4a;
}

.up,
.down,
.strong {
    stroke: #1e3a20;
}

.up {
    fill: #55bb55;
}

.strong {
    fill: #079407;
}

.down {
    fill: #d92346;
    stroke: #5a1020;
}

.legend {
    position: relative;
    padding: 4px 0 0 5px;
}

.legend-row {
    display: flex;
    align-items: center;
    height: 14px;
}

.gold {
    width: 12px;
    height: 12px;
}

.name {
    margin-left: 3px;
    font-size: 10px;
}

.flag {
    width: 9px;
    height: 9px;
    margin-left: 12px;
}

.status {
    display: flex;
    align-items: center;
    width: 26px;
    height: 11px;
    margin: 0 5px 0 8px;
    border-radius: 6px;
    background: linear-gradient(to right, #dcf2ec 50%, #f0b4d2 50%);
}

.market {
    width: 6px;
    height: 6px;
    margin: 0 5px 0 4px;
    border-radius: 50%;
    background-color: #16a077;
}

.approx {
    font-size: 9px;
    font-style: normal;
    color: #b32472;
}

.ohlc {
    display: flex;
    gap: 3px;
    font-family: Roboto, sans-serif;
    font-size: 9px;
}

.quotes {
    display: flex;
    align-items: center;
    gap: 5px;
    margin-top: 3px;
}

.quote {
    flex-direction: column;
    width: 48px;
    height: 23px;
    border: 1px solid;
    border-radius: 4px;
    font-size: 7px;
    line-height: 9px;
    background-color: #fff;
}

.quote b {
    font-size: 8px;
}

.quote.sell {
    color: #c22a50;
}

.quote.buy {
    color: #4056d0;
}

.spread {
    font-size: 7px;
}

.collapse {
    gap: 3px;
    width: 21px;
    height: 14px;
    margin-top: 5px;
    border: 1px solid #e8e8e8;
    border-radius: 2px;
}

.collapse .icon {
    width: 8px;
    height: 8px;
}

.brand {
    position: absolute;
    left: 7px;
    bottom: 6px;
    display: flex;
    align-items: center;
    gap: 4px;
    font: 600 14px/16px Inter, sans-serif;
    color: #111;
}

.brand svg {
    width: 20px;
    height: 10px;
}

.price-axis {
    position: relative;
    font-size: 8px;
}

.prices {
    display: flex;
    flex-direction: column;
    height: 100%;
    padding: 8px 6px 13px 0;
}

.prices span {
    flex: 1;
    display: flex;
    align-items: center;
    justify-content: flex-end;
}

.prices .covered {
    visibility: hidden;
}

.tag {
    position: absolute;
    left: 1px;
    width: 40px;
    padding-left: 5px;
    line-height: 11px;
    border-radius: 1px;
    font-weight: 500;
    color: #fff;
}

.tag-stop {
    top: 85px;
    background-color: #d92346;
}

.tag-entry {
    top: 143px;
    background-color: #808080;
}

.tag-cross {
    top: 154px;
    line-height: 13px;
    background-color: #080808;
}

.tag-line {
    top: 197px;
    background-color: #2d5bea;
}

.tag-last {
    top: 215px;
    line-height: 10px;
    background-color: #4caf50;
}

.tag-target {
    top: 548px;
    background-color: #159c78;
}

.axis-add {
    position: absolute;
    top: 154px;
    left: -13px;
    width: 13px;
    height: 13px;
    border-radius: 2px;
    color: #fff;
    background-color: #111;
}

.axis-add .icon {
    width: 12px;
    height: 12px;
}

.time-axis {
    position: relative;
    overflow: hidden;
    font-size: 8px;
}

.times {
    display: flex;
    height: 18px;
    margin: 0 7px 0 -12px;
    align-items: center;
}

.times span {
    flex: 1;
    text-align: center;
}

.time-tag {
    position: absolute;
    top: 0;
    left: 409px;
    width: 87px;
    line-height: 16px;
    text-align: center;
    font-weight: bold;
    color: #fff;
    background-color: #080808;
}

.axis-settings .icon {
    width: 12px;
    height: 12px;
}

.range-bar {
    grid-column: 1 / -1;
    display: flex;
    align-items: center;
    gap: 7px;
    padding: 0 7px 0 9px;
    border-top: 1px solid #ebebeb;
}

.ranges {
    display: flex;
    gap: 7px;
    font-family: Roboto, sans-serif;
}

.utc {
    margin-left: auto;
}

/* taskbar */
.taskbar {
    display: grid;
    grid-template-columns: 1fr auto 1fr;
    align-items: center;
    height: 32px;
    padding: 0 13px 0 12px;
    color: #e8eeee;
    background: linear-gradient(to right, #172c2b, #1c272d 12%, #15302e 30%, #182a2c 60%, #17262b);
    font-size: 8px;
    line-height: 10px;
}

.weather {
    justify-self: start;
    gap: 5px;
    text-align: left;
}

.weather svg {
    width: 17px;
    height: 12px;
}

.dock {
    display: flex;
    align-items: center;
    gap: 3px;
}

.dock button {
    position: relative;
    width: 26px;
    height: 28px;
    border-radius: 3px;
}

.dock button > svg {
    width: 18px;
    height: 18px;
}

.dock .running {
    background-color: #243538;
}

.running::after,
.idle::after {
    content: "";
    position: absolute;
    bottom: 1px;
    width: 10px;
    height: 2px;
    border-radius: 1px;
    background-color: #5cc0ea;
}

.idle::after {
    width: 4px;
    background-color: #9aa3a5;
}

.search {
    display: flex;
    align-items: center;
    width: 145px;
    height: 20px;
    margin-right: 2px;
    padding: 0 1px 0 4px;
    border-radius: 10px;
    color: #222;
    background-color: #eef2f3;
}

.search input {
    flex: 1;
    padding-left: 3px;
    font-family: Roboto, sans-serif;
    font-size: 10px;
}

.search input::placeholder {
    color: #666;
}

.search .icon {
    width: 16px;
    height: 16px;
}

.food {
    width: 34px;
    height: 18px;
}

.tray {
    justify-self: end;
    display: flex;
    align-items: center;
    gap: 3px;
}

.mic {
    color: #8cc5c8;
}

.lang {
    margin: 0 6px;
}

.status-icons .icon {
    width: 17px;
    height: 17px;
}

.clock {
    margin-left: 3px;
    text-align: right;
}
```
